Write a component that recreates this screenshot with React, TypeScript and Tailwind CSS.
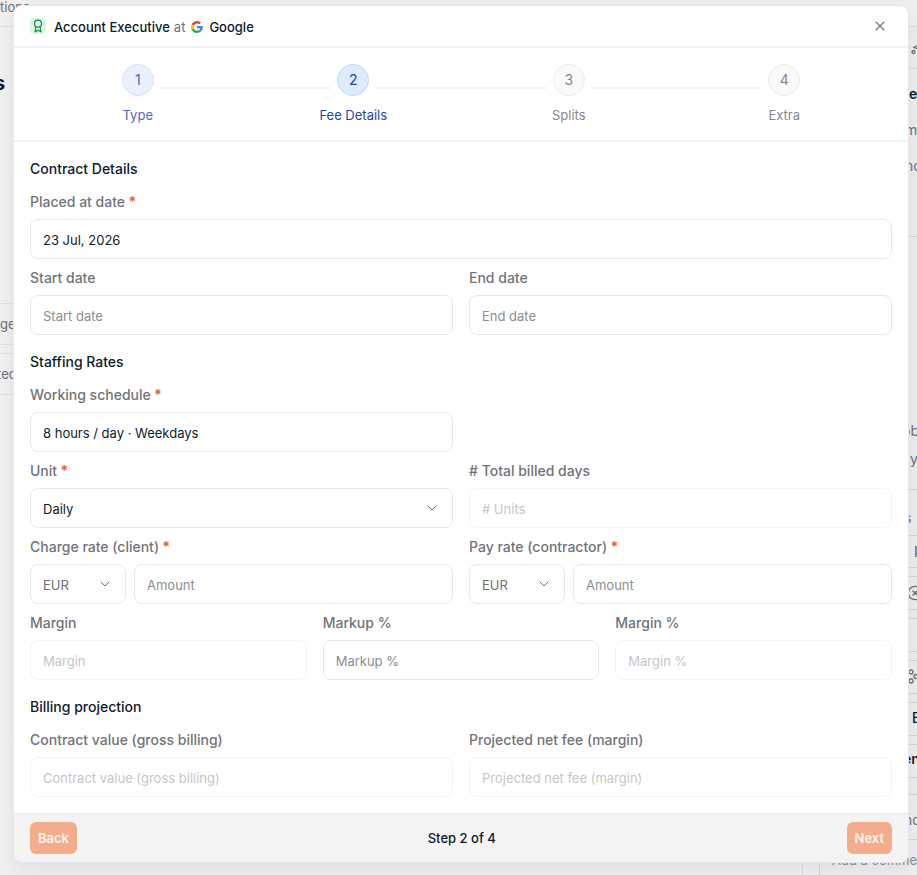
import type { InputHTMLAttributes, ReactNode } from 'react';
import { Award, ChevronDown, CircleX, X } from 'lucide-react';
import clsx from 'clsx';

const steps = ['Type', 'Fee Details', 'Splits', 'Extra'];
const current = 1;

function GoogleLogo() {
  return (
    <svg viewBox="0 0 48 48" className="size-3" aria-hidden="true">
      <path fill="#EA4335" d="M24 9.5c3.54 0 6.71 1.22 9.21 3.6l6.85-6.85C35.9 2.38 30.47 0 24 0 14.62 0 6.51 5.38 2.56 13.22l7.98 6.19C12.43 13.72 17.74 9.5 24 9.5z" />
      <path fill="#4285F4" d="M46.98 24.55c0-1.57-.15-3.09-.38-4.55H24v9.02h12.94c-.58 2.96-2.26 5.48-4.78 7.18l7.73 6c4.51-4.18 7.09-10.36 7.09-17.65z" />
      <path fill="#FBBC05" d="M10.53 28.59c-.48-1.45-.76-2.99-.76-4.59s.27-3.14.76-4.59l-7.98-6.19C.92 16.46 0 20.12 0 24s.92 7.54 2.56 10.78l7.97-6.19z" />
      <path fill="#34A853" d="M24 48c6.48 0 11.93-2.13 15.89-5.81l-7.73-6c-2.15 1.45-4.92 2.3-8.16 2.3-6.26 0-11.57-4.22-13.47-9.91l-7.98 6.19C6.51 42.62 14.62 48 24 48z" />
    </svg>
  );
}

function SparkIcon() {
  return (
    <svg viewBox="0 0 16 16" className="size-4 shrink-0" fill="none" stroke="currentColor" strokeWidth="1.3" strokeLinejoin="round">
      <path d="M9 1.5l1.5 4 4 1.5-4 1.5L9 13l-2-4-4.5-1.5L7 5.5z" />
      <circle cx="2.5" cy="12" r="1.5" />
    </svg>
  );
}

function NodesIcon() {
  return (
    <svg viewBox="0 0 16 16" className="size-4 shrink-0" fill="none" stroke="currentColor" strokeWidth="1.3">
      <circle cx="3" cy="3" r="2" />
      <circle cx="3" cy="12" r="2" />
      <circle cx="8" cy="7.5" r="2" />
      <circle cx="13" cy="3" r="2" />
      <circle cx="13" cy="12" r="2" />
    </svg>
  );
}

function Stepper() {
  return (
    <ol className="grid grid-cols-4 border-b-2 border-[#f1f2f3] px-4 pt-4 pb-[14px]">
      {steps.map((name, i) => (
        <li key={name} className="flex flex-col gap-2">
          <div className="flex items-center gap-[6px]">
            <span className={clsx('mt-4 h-[2px] flex-1', i > 0 && 'bg-[#f3f4f5]')} />
            <span
              className={clsx(
                'flex size-8 items-center justify-center rounded-full border',
                i < current && 'border-[#d3e2fb] bg-[#e9f1fe] text-[#5468bd]',
                i === current && 'border-[#bfd7fa] bg-[#dfebfe] text-[#2743a8]',
                i > current && 'border-[#ececed] bg-[#fafafa] text-[#87888b]',
              )}
            >
              {i + 1}
            </span>
            <span className={clsx('mt-4 h-[2px] flex-1', i < steps.length - 1 && 'bg-[#f3f4f5]')} />
          </div>
          <span
            className={clsx(
              'text-center text-[13px] leading-[22px]',
              i < current && 'text-[#5468bd]',
              i === current && 'text-[#2743a8]',
              i > current && 'text-[#87888b]',
            )}
          >
            {name}
          </span>
        </li>
      ))}
    </ol>
  );
}

interface FieldProps {
  id: string;
  label: string;
  required?: boolean;
  className?: string;
  children: ReactNode;
}

function Field({ id, label, required, className, children }: FieldProps) {
  return (
    <div className={clsx('flex min-w-0 flex-col gap-[6px]', className)}>
      <label htmlFor={id} className="leading-[22px] font-medium text-[#727378]">
        {label}
        {required && <span className="font-bold text-[#e06a1f]"> *</span>}
      </label>
      {children}
    </div>
  );
}

function TextInput({ className, ...props }: InputHTMLAttributes<HTMLInputElement>) {
  return (
    <input
      type="text"
      className={clsx(
        'h-10 w-full min-w-0 rounded-lg border border-[#e5e8ea] bg-white px-3 pt-[2px] text-[13px] text-[#0e1b2b] placeholder:text-[#8b8d91] disabled:opacity-50',
        className,
      )}
      {...props}
    />
  );
}

interface SelectProps {
  id: string;
  value: string;
  ariaLabel?: string;
  className?: string;
}

function SelectBox({ id, value, ariaLabel, className }: SelectProps) {
  return (
    <div className={clsx('relative text-[13px]', className)}>
      <select
        id={id}
        aria-label={ariaLabel}
        defaultValue={value}
        className="h-10 w-full appearance-none rounded-lg border border-[#e5e8ea] bg-white px-3 pt-[2px]"
      >
        <option>{value}</option>
      </select>
      <ChevronDown className="pointer-events-none absolute top-3 right-[13px] size-4 text-[#6d6f74]" strokeWidth={1.5} />
    </div>
  );
}

function Rate({ id }: { id: string }) {
  return (
    <div className="flex gap-2">
      <SelectBox id={`${id}-currency`} value="EUR" ariaLabel="Currency" className="w-24 shrink-0 text-[#6d6f74]" />
      <TextInput id={id} placeholder="Amount" />
    </div>
  );
}

function Section({ title, children }: { title: string; children: ReactNode }) {
  return (
    <section className="flex flex-col gap-3">
      <h2 className="leading-[21px] font-medium text-[#0e1b2b]">{title}</h2>
      <div className="grid grid-cols-6 gap-x-4 gap-y-2">{children}</div>
    </section>
  );
}

// Dimmed record page that sits behind the dialog
function Backdrop() {
  return (
    <div className="absolute inset-0 flex flex-col overflow-hidden bg-[#f0f0f1] text-[#6d6f74]" aria-hidden="true">
      <div className="h-[27px] shrink-0 border-b border-[#e0e0e3] text-[13px] leading-[14px]">tions</div>
      <div className="flex flex-1 justify-between">
        <div className="flex flex-1 flex-col border-r border-[#dcdce2]">
          <div className="-ml-[6px] h-[276px] pt-[42px] text-xl font-bold text-[#0e1b2b]">s</div>
          <div className="h-[42px] border-y border-[#e0e0e3] pt-[10px] text-[13px]">ge</div>
          <div className="mt-2 h-[42px] border-y border-[#e0e0e3] pt-[10px]">
            <span className="-ml-[3px] text-[13px]">ted</span>
          </div>
        </div>
        <div className="w-4" />
        <div className="flex w-[98px] flex-col border-l border-[#d4d4dc] bg-[#eeeeef] whitespace-nowrap">
          <div className="flex h-[42px] shrink-0 items-center border-b border-[#dcdcdf] pl-[91px]">
            <SparkIcon />
          </div>
          <div className="flex h-[168px] shrink-0 flex-col gap-4 border-b border-[#d4d4d8] pt-[15px] pl-[85px]">
            <b className="pl-1 font-semibold text-[#0e1b2b]">e</b>
            <span>m</span>
            <span>nd</span>
          </div>
          <div className="flex h-[253px] shrink-0 flex-col justify-end gap-2 border-b border-[#d4d4d8] pb-5 pl-[82px]">
            <span>ob</span>
            <span className="pl-2">y</span>
          </div>
          <div className="h-[46px] shrink-0 border-b border-[#d4d4d8] pt-[18px] pl-[84px]">s</div>
          <div className="h-8 shrink-0 border-b border-[#d4d4d8] pt-[6px] pl-[94px] font-medium">I</div>
          <div className="mt-2 flex h-[34px] shrink-0 items-center border-y border-[#d4d4d8] pl-[87px]">
            <CircleX className="size-4 shrink-0" strokeWidth={2} />
          </div>
          <div className="mt-2 h-[34px] shrink-0 border-y border-[#d4d4d8]" />
          <div className="mt-2 flex h-[34px] shrink-0 items-center border-y border-[#d4d4d8] pl-[88px]">
            <NodesIcon />
          </div>
          <div className="mt-2 h-[34px] shrink-0 border-y border-[#d4d4d8] pt-[5px] pl-[92px] font-medium text-[#0e1b2b]">E</div>
          <div className="mt-2 h-[34px] shrink-0 border-y border-[#d4d4d8] pt-[4px] pl-[83px] font-semibold text-[#0e1b2b]">en</div>
          <div className="h-[17px] shrink-0 border-b border-[#d4d4d8]" />
          <div className="h-[45px] shrink-0 border-b border-[#d4d4d8] pt-[15px] pl-[84px]">nd</div>
          <div className="pt-[10px] pl-3 text-[13px] text-[#8b8d91]">Add a comment</div>
        </div>
      </div>
    </div>
  );
}

export default function App() {
  return (
    <div className="relative min-h-screen font-['Inter','Liberation_Sans',sans-serif] text-sm leading-5">
      <Backdrop />
      <div className="relative pt-[6px] pr-[9px] pb-3 pl-[14px]">
        <div
          role="dialog"
          aria-labelledby="dialog-title"
          className="overflow-hidden rounded-lg bg-white shadow-[0_0_0_1px_#e6e7ee,0_6px_20px_rgba(30,30,60,0.08)]"
        >
          <header className="flex h-[42px] items-center border-b-2 border-[#eff1f2] px-4">
            <span className="flex size-4 items-center justify-center rounded-sm bg-[#d3fbe0] text-[#2b7a4b]">
              <Award className="size-[14px]" strokeWidth={2} />
            </span>
            <h1 id="dialog-title" className="ml-2 flex items-center pt-[2px] text-[13px] font-medium text-[#0e1b2b]">
              Account Executive
              <span className="mx-1 font-normal text-[#6d6f74]">at</span>
              <span className="ml-[2px] flex items-center gap-[6px]">
                <GoogleLogo />
                Google
              </span>
            </h1>
            <button type="button" aria-label="Close" className="ml-auto flex size-6 items-center justify-center text-[#77797d]">
              <X className="size-4" strokeWidth={1.75} />
            </button>
          </header>

          <Stepper />

          <form className="flex flex-col gap-4 p-4">
            <Section title="Contract Details">
              <Field id="placed-at" label="Placed at date" required className="col-span-6">
                <TextInput id="placed-at" defaultValue="23 Jul, 2026" />
              </Field>
              <Field id="start-date" label="Start date" className="col-span-3">
                <TextInput id="start-date" placeholder="Start date" />
              </Field>
              <Field id="end-date" label="End date" className="col-span-3">
                <TextInput id="end-date" placeholder="End date" />
              </Field>
            </Section>

            <Section title="Staffing Rates">
              <Field id="schedule" label="Working schedule" required className="col-span-3">
                <TextInput id="schedule" defaultValue="8 hours / day · Weekdays" />
              </Field>
              <Field id="unit" label="Unit" required className="col-span-3 col-start-1">
                <SelectBox id="unit" value="Daily" className="text-[#0e1b2b]" />
              </Field>
              <Field id="billed-days" label="# Total billed days" className="col-span-3">
                <TextInput id="billed-days" placeholder="# Units" disabled />
              </Field>
              <Field id="charge-rate" label="Charge rate (client)" required className="col-span-3">
                <Rate id="charge-rate" />
              </Field>
              <Field id="pay-rate" label="Pay rate (contractor)" required className="col-span-3">
                <Rate id="pay-rate" />
              </Field>
              <Field id="margin" label="Margin" className="col-span-2">
                <TextInput id="margin" placeholder="Margin" disabled />
              </Field>
              <Field id="markup" label="Markup %" className="col-span-2">
                <TextInput id="markup" placeholder="Markup %" />
              </Field>
              <Field id="margin-pct" label="Margin %" className="col-span-2">
                <TextInput id="margin-pct" placeholder="Margin %" disabled />
              </Field>
            </Section>

            <Section title="Billing projection">
              <Field id="contract-value" label="Contract value (gross billing)" className="col-span-3">
                <TextInput id="contract-value" placeholder="Contract value (gross billing)" disabled />
              </Field>
              <Field id="net-fee" label="Projected net fee (margin)" className="col-span-3">
                <TextInput id="net-fee" placeholder="Projected net fee (margin)" disabled />
              </Field>
            </Section>
          </form>

          <footer className="flex items-center justify-between border-t border-[#ececee] bg-[#f4f4f4] px-4 py-2 text-[13px]">
            <button type="button" className="h-8 rounded-md bg-[#f3ad8c] px-2 font-semibold text-[#fdf3ee]">
              Back
            </button>
            <span className="font-medium text-[#0e1b2b]">Step 2 of 4</span>
            <button type="button" className="h-8 rounded-md bg-[#f3ad8c] px-2 font-semibold text-[#fdf3ee]">
              Next
            </button>
          </footer>
        </div>
      </div>
    </div>
  );
}
